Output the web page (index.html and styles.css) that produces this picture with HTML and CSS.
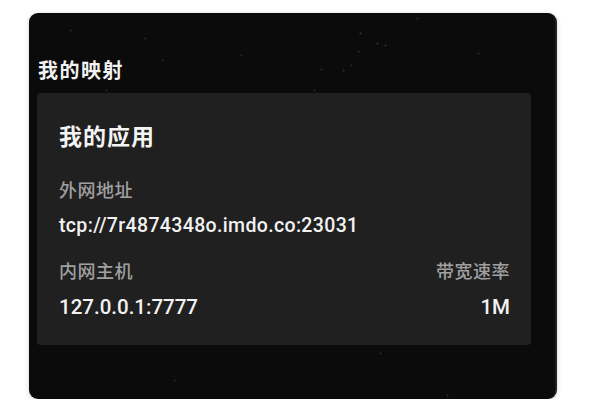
FILE: index.html
```html
<!DOCTYPE html>
<html lang="zh-CN">
<head>
<meta charset="utf-8">
<title>我的映射</title>
<link rel="stylesheet" href="styles.css">
</head>
<body>
<div class="panel">
  <h1 class="panel-title">我的映射</h1>
  <div class="card">
    <h2 class="app-name">我的应用</h2>
    <div class="field">
      <div class="label">外网地址</div>
      <div class="value value-addr">tcp://7r4874348o.imdo.co:23031</div>
    </div>
    <div class="row">
      <div class="field">
        <div class="label">内网主机</div>
        <div class="value value-big">127.0.0.1:7777</div>
      </div>
      <div class="field field-right">
        <div class="label">带宽速率</div>
        <div class="value value-big">1M</div>
      </div>
    </div>
  </div>
</div>
</body>
</html>
```

FILE: styles.css
```css
html, body {
  margin: 0;
  padding: 0;
  background: #ffffff;
}

body {
  font-family: Roboto, "Noto Sans CJK SC", sans-serif;
  -webkit-font-smoothing: antialiased;
}

.panel {
  position: relative;
  box-sizing: border-box;
  margin: 13px 43px 0 29px;
  height: 386px;
  padding: 43px 24px 0 8px;
  background: #0b0b0b;
  border-right: 2px solid #222222;
  border-radius: 9px;
  box-shadow: 0 1px 5px rgba(0, 0, 0, 0.18);
  overflow: hidden;
}

/* faint star speckles */
.panel::before {
  content: "";
  position: absolute;
  left: 0;
  top: 0;
  width: 1px;
  height: 1px;
  border-radius: 50%;
  background: transparent;
  box-shadow:
    41px 17px 0 0.5px #2c2c2c,
    116px 25px 0 0.5px #2c2c2c,
    212px 42px 0 0.5px #2a2a2a,
    133px 47px 0 0.5px #2a2a2a,
    292px 56px 0 0.5px #2c2c2c,
    331px 20px 0 0.5px #3a3a3a,
    348px 30px 0 0.5px #363636,
    356px 32px 0 0.5px #363636,
    329px 38px 0 0.5px #2c2c2c,
    322px 52px 0 0.5px #2c2c2c,
    314px 57px 0 0.5px #2c2c2c,
    449px 40px 0 0.5px #2c2c2c,
    388px 5px 0 0.5px #2a2a2a,
    285px 77px 0 0.5px #2c2c2c,
    77px 77px 0 0.5px #2a2a2a,
    145px 367px 0 0.5px #2a2a2a,
    351px 340px 0 0.5px #2c2c2c,
    418px 382px 0 0.5px #2c2c2c;
}

.panel-title {
  margin: 0 0 9px 1px;
  font-family: "Noto Sans CJK SC", sans-serif;
  font-size: 20px;
  line-height: 28px;
  font-weight: 700;
  letter-spacing: 1.5px;
  color: #f2f2f2;
}

.card {
  box-sizing: border-box;
  height: 252px;
  padding: 26px 21px 0 22px;
  background: #202020;
  border-radius: 4px;
}

.app-name {
  margin: 0;
  font-family: "Noto Sans CJK SC", sans-serif;
  font-size: 23px;
  line-height: 32px;
  font-weight: 700;
  letter-spacing: 1px;
  color: #f4f4f4;
}

.field {
  display: flex;
  flex-direction: column;
}

.card > .field {
  margin-top: 25px;
}

.label {
  font-family: "Noto Sans CJK SC", sans-serif;
  font-size: 18px;
  line-height: 26px;
  font-weight: 500;
  letter-spacing: 0.5px;
  color: #a0a0a0;
}

.value {
  color: #f2f2f2;
  font-weight: 500;
}

.value-addr {
  margin-top: 11px;
  font-size: 19.5px;
  line-height: 26px;
  letter-spacing: 0.35px;
}

.value-big {
  margin-top: 10px;
  font-size: 20.5px;
  line-height: 28px;
}

.row {
  display: flex;
  justify-content: space-between;
  margin-top: 18px;
}

.field-right {
  align-items: flex-end;
}
```
